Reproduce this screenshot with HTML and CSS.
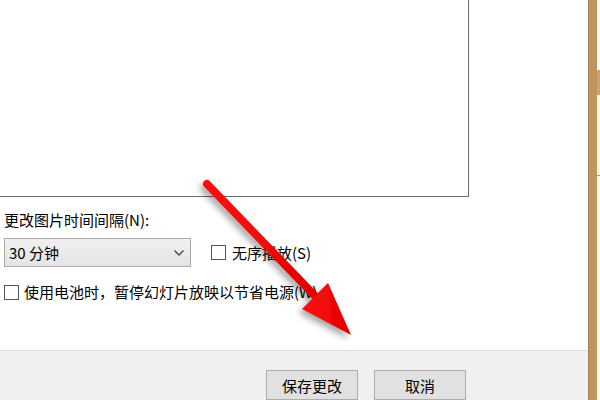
FILE: index.html
```html
<!DOCTYPE html>
<html lang="zh-CN">
<head>
  <meta charset="UTF-8" />
  <title>幻灯片放映设置</title>
  <link rel="stylesheet" href="styles.css">
</head>
<body>

  <div id="window">
    <!-- 设置区域 -->
    <div id="settings">
      <div class="preview"></div>

      <div class="field-label">更改图片时间间隔(N):</div>

      <div class="row">
        <div class="combo">
          <span>30 分钟</span>
          <svg class="chevron" width="10" height="6" viewBox="0 0 10 6">
            <path d="M0.5 0.5 L5 5 L9.5 0.5" fill="none" stroke="#444" stroke-width="1.3" />
          </svg>
        </div>
        <label class="check shuffle"><span class="box"></span>无序播放(S)</label>
      </div>

      <label class="check battery"><span class="box"></span>使用电池时，暂停幻灯片放映以节省电源(W)</label>
    </div>

    <!-- 按钮区域 -->
    <div id="footer">
      <button class="btn">保存更改</button>
      <button class="btn">取消</button>
    </div>
  </div>

  <div id="frame-edge"></div>
  <div id="behind">
    <div class="b-top"></div>
    <div class="b-tab"></div>
    <div class="b-mid"></div>
    <div class="b-low"></div>
  </div>

  <!-- 红色箭头 -->
  <svg class="arrow" width="600" height="400" viewBox="0 0 600 400">
    <defs>
      <filter id="shadow" x="-20%" y="-20%" width="140%" height="140%">
        <feDropShadow dx="-3" dy="4" stdDeviation="3" flood-color="#000" flood-opacity="0.35" />
      </filter>
      <linearGradient id="red" x1="0" y1="0" x2="1" y2="0">
        <stop offset="0" stop-color="#ff1010" />
        <stop offset="1" stop-color="#e00000" />
      </linearGradient>
    </defs>
    <g filter="url(#shadow)">
      <line x1="207" y1="184" x2="318" y2="299" stroke="url(#red)" stroke-width="8" stroke-linecap="round" />
      <polygon points="351,335 302,309 328,283" fill="url(#red)" />
    </g>
  </svg>

</body>
</html>
```

FILE: styles.css
```css
html, body {
  margin: 0;
  padding: 0;
}

body {
  display: flex;
  width: 600px;
  height: 400px;
  overflow: hidden;
  font-family: "Noto Sans CJK SC", "Liberation Sans", sans-serif;
  font-size: 15px;
  color: #000;
  background: #fff;
  position: relative;
}

#window {
  width: 588px;
  display: flex;
  flex-direction: column;
}

/* 设置区域 */
#settings {
  height: 351px;
  background: #fff;
  padding-left: 4px;
  box-sizing: border-box;
}

.preview {
  width: 464px;
  height: 196px;
  margin-left: -4px;
  padding-left: 4px;
  border-right: 1px solid #6b6b6b;
  border-bottom: 1px solid #6b6b6b;
}

.field-label {
  margin-top: 13px;
  line-height: 20px;
  height: 20px;
}

.row {
  display: flex;
  align-items: center;
  margin-top: 8px;
  gap: 20px;
}

.combo {
  width: 187px;
  height: 29px;
  box-sizing: border-box;
  border: 1px solid #acacac;
  background: linear-gradient(#f0f0f0, #e5e5e5);
  display: flex;
  align-items: center;
  justify-content: space-between;
  padding: 0 6px 0 4px;
}

.check {
  display: flex;
  align-items: center;
  gap: 6px;
  line-height: 20px;
}

.box {
  width: 15px;
  height: 15px;
  box-sizing: border-box;
  border: 1px solid #555;
  background: #fff;
}

.battery {
  margin-top: 15px;
  gap: 5px;
}

/* 按钮区域 */
#footer {
  flex: 1;
  background: #f0f0f0;
  border-top: 1px solid #dcdcdc;
  display: flex;
  padding: 19px 0 0 266px;
  gap: 16px;
}

.btn {
  width: 92px;
  height: 30px;
  border: 1px solid #adadad;
  background: #e1e1e1;
  font-family: inherit;
  font-size: 15px;
  color: #000;
  padding: 0;
}

#frame-edge {
  width: 9px;
  background: #bf955e;
  border-left: 1px solid #a9814f;
  box-sizing: border-box;
}

#behind {
  width: 3px;
  display: flex;
  flex-direction: column;
}

.b-top { height: 70px; background: #fbfbfb; }
.b-tab { height: 25px; background: #c9a470; }
.b-mid { height: 80px; background: #f3f3f3; border-bottom: 1px solid #9a9a9a; }
.b-low { flex: 1; background: #f8f8f8; }

.arrow {
  position: absolute;
  left: 0;
  top: 0;
  pointer-events: none;
}
```
